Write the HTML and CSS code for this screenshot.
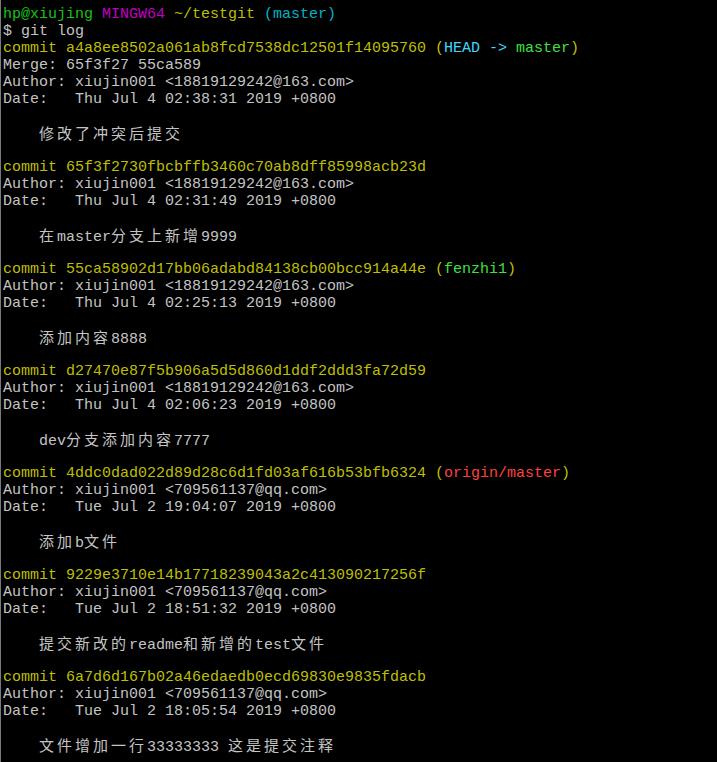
FILE: index.html
```html
<!DOCTYPE html>
<html lang="zh-CN">
<head>
<meta charset="utf-8">
<title>git log</title>
<link rel="stylesheet" href="styles.css">
</head>
<body>
<div class="term">
<div class="ln"><span class="g">hp@xiujing</span> <span class="m">MINGW64</span> <span class="y">~/testgit</span> <span class="c">(master)</span></div>
<div class="ln">$ git log</div>
<div class="ln y">commit a4a8ee8502a061ab8fcd7538dc12501f14095760 (<span class="bc">HEAD -&gt; </span><span class="bg">master</span>)</div>
<div class="ln">Merge: 65f3f27 55ca589</div>
<div class="ln">Author: xiujin001 &lt;18819129242@163.com&gt;</div>
<div class="ln">Date:   Thu Jul 4 02:38:31 2019 +0800</div>
<div class="ln"></div>
<div class="ln">    <span class="cjk">修改了冲突后提交</span></div>
<div class="ln"></div>
<div class="ln y">commit 65f3f2730fbcbffb3460c70ab8dff85998acb23d</div>
<div class="ln">Author: xiujin001 &lt;18819129242@163.com&gt;</div>
<div class="ln">Date:   Thu Jul 4 02:31:49 2019 +0800</div>
<div class="ln"></div>
<div class="ln">    <span class="cjk">在</span>master<span class="cjk">分支上新增</span>9999</div>
<div class="ln"></div>
<div class="ln y">commit 55ca58902d17bb06adabd84138cb00bcc914a44e (<span class="bg">fenzhi1</span>)</div>
<div class="ln">Author: xiujin001 &lt;18819129242@163.com&gt;</div>
<div class="ln">Date:   Thu Jul 4 02:25:13 2019 +0800</div>
<div class="ln"></div>
<div class="ln">    <span class="cjk">添加内容</span>8888</div>
<div class="ln"></div>
<div class="ln y">commit d27470e87f5b906a5d5d860d1ddf2ddd3fa72d59</div>
<div class="ln">Author: xiujin001 &lt;18819129242@163.com&gt;</div>
<div class="ln">Date:   Thu Jul 4 02:06:23 2019 +0800</div>
<div class="ln"></div>
<div class="ln">    dev<span class="cjk">分支添加内容</span>7777</div>
<div class="ln"></div>
<div class="ln y">commit 4ddc0dad022d89d28c6d1fd03af616b53bfb6324 (<span class="br">origin/master</span>)</div>
<div class="ln">Author: xiujin001 &lt;709561137@qq.com&gt;</div>
<div class="ln">Date:   Tue Jul 2 19:04:07 2019 +0800</div>
<div class="ln"></div>
<div class="ln">    <span class="cjk">添加</span>b<span class="cjk">文件</span></div>
<div class="ln"></div>
<div class="ln y">commit 9229e3710e14b17718239043a2c413090217256f</div>
<div class="ln">Author: xiujin001 &lt;709561137@qq.com&gt;</div>
<div class="ln">Date:   Tue Jul 2 18:51:32 2019 +0800</div>
<div class="ln"></div>
<div class="ln">    <span class="cjk">提交新改的</span>readme<span class="cjk">和新增的</span>test<span class="cjk">文件</span></div>
<div class="ln"></div>
<div class="ln y">commit 6a7d6d167b02a46edaedb0ecd69830e9835fdacb</div>
<div class="ln">Author: xiujin001 &lt;709561137@qq.com&gt;</div>
<div class="ln">Date:   Tue Jul 2 18:05:54 2019 +0800</div>
<div class="ln"></div>
<div class="ln">    <span class="cjk">文件增加一行</span>33333333 <span class="cjk">这是提交注释</span></div>
</div>
</body>
</html>
```
FILE: styles.css
```css
html, body {
  margin: 0;
  padding: 0;
  background: #000;
  height: 100%;
}
.term {
  box-sizing: border-box;
  min-height: 100%;
  border-left: 1px solid #7a7a7a;
  padding: 6px 0 0 2px;
  font-family: "Liberation Mono", "DejaVu Sans Mono", monospace;
  font-size: 15px;
  color: #c4c4c4;
}
.ln {
  height: 17px;
  line-height: 17px;
  white-space: pre;
}
.cjk {
  font-family: "Noto Sans CJK SC", sans-serif;
  font-size: 15px;
  letter-spacing: 3px;
  line-height: 1;
}
.g { color: #19c019; }
.m { color: #c000c0; }
.y { color: #bfbf00; }
.c { color: #00b4c4; }
.bc { color: #40d8ff; }
.bg { color: #40e040; }
.br { color: #ff4040; }
```
